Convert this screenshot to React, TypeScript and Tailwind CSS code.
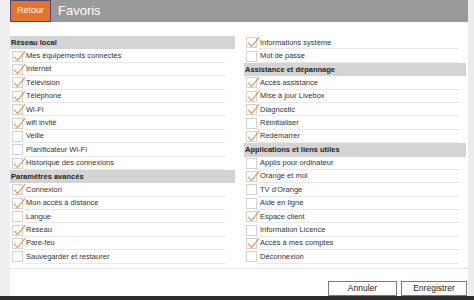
import React from "react";

type Item = { label: string; checked?: boolean; header?: boolean };

const left: Item[] = [
  { label: "Réseau local", header: true },
  { label: "Mes équipements connectés", checked: true },
  { label: "Internet", checked: true },
  { label: "Télévision", checked: true },
  { label: "Téléphone", checked: true },
  { label: "Wi-Fi", checked: true },
  { label: "wifi invité", checked: true },
  { label: "Veille" },
  { label: "Planificateur Wi-Fi" },
  { label: "Historique des connexions", checked: true },
  { label: "Paramètres avancés", header: true },
  { label: "Connexion", checked: true },
  { label: "Mon accès à distance", checked: true },
  { label: "Langue" },
  { label: "Réseau", checked: true },
  { label: "Pare-feu", checked: true },
  { label: "Sauvegarder et restaurer" },
];

const right: Item[] = [
  { label: "Informations système", checked: true },
  { label: "Mot de passe" },
  { label: "Assistance et dépannage", header: true },
  { label: "Accès assistance", checked: true },
  { label: "Mise à jour Livebox", checked: true },
  { label: "Diagnostic", checked: true },
  { label: "Réinitialiser" },
  { label: "Redémarrer", checked: true },
  { label: "Applications et liens utiles", header: true },
  { label: "Applis pour ordinateur" },
  { label: "Orange et moi", checked: true },
  { label: "TV d'Orange" },
  { label: "Aide en ligne" },
  { label: "Espace client", checked: true },
  { label: "Information Licence" },
  { label: "Accès à mes comptes", checked: true },
  { label: "Déconnexion" },
];

function Box({ checked }: { checked?: boolean }) {
  return (
    <div className="relative w-[11px] h-[11px] shrink-0 border border-[#d2d2d2] bg-white">
      {checked && (
        <svg
          className="absolute left-[0px] top-[-2px]"
          width="13"
          height="13"
          viewBox="0 0 13 13"
        >
          <polyline
            points="1.5,7 4.5,10.5 12,1.5"
            fill="none"
            stroke="#ec8640"
            strokeWidth="1.15"
            strokeLinecap="round"
            strokeLinejoin="round"
          />
        </svg>
      )}
    </div>
  );
}

function Column({ items, right }: { items: Item[]; right?: boolean }) {
  return (
    <div className={right ? "w-[222px] flex flex-col" : "w-[225px] flex flex-col"}>
      {items.map((it) =>
        it.header ? (
          <div
            key={it.label}
            className="h-[13.4px] flex items-center bg-[#d4d4d4] pl-[1px] text-[7.5px] font-bold text-[#222]"
          >
            {it.label}
          </div>
        ) : (
          <div key={it.label} className="h-[13.4px] flex items-center pl-[2px]">
            <Box checked={it.checked} />
            <div
              className={
                right
                  ? "flex-1 h-full flex items-center pl-[3px] mr-[7px] border-b border-[#e8e8e8] text-[7.5px] text-[#333]"
                  : "flex-1 h-full flex items-center pl-[3px] mr-[10px] border-b border-[#e8e8e8] text-[7.5px] text-[#333]"
              }
            >
              {it.label}
            </div>
          </div>
        )
      )}
    </div>
  );
}

export default function App() {
  return (
    <div
      className="w-[474px] h-[300px] flex flex-col overflow-hidden bg-white"
      style={{ fontFamily: '"Liberation Sans", Arial, sans-serif' }}
    >
      <div className="flex-1 flex">
        <div className="w-[10px] bg-[#efefef]" />
        <div className="flex-1 flex flex-col bg-white">
          {/* Header */}
          <div className="h-[22px] flex bg-[#999999]">
            <button className="w-[41px] h-full bg-[#e8722c] border border-[#4b4a6e] text-white text-[9px] flex items-center justify-center">
              Retour
            </button>
            <div className="pl-[7px] flex items-center text-white text-[13px]">Favoris</div>
          </div>

          {/* Lists */}
          <div className="pt-[14px] flex gap-[9px]">
            <Column items={left} />
            <Column items={right} right />
          </div>

          {/* Footer */}
          <div className="mt-[4px] border-t border-[#e4e4e4] flex-1 flex items-end justify-end gap-[4px] pr-[1px]">
            <button className="w-[69px] h-[15px] border border-[#7a7a7a] bg-white text-[8.5px] text-[#222]">
              Annuler
            </button>
            <button className="w-[66px] h-[15px] border border-[#7a7a7a] bg-white text-[8.5px] text-[#222]">
              Enregistrer
            </button>
          </div>
        </div>
        <div className="w-[6px] bg-[#ececec]" />
      </div>
      <div className="h-[4px] bg-[#2e2e2e]" />
    </div>
  );
}
